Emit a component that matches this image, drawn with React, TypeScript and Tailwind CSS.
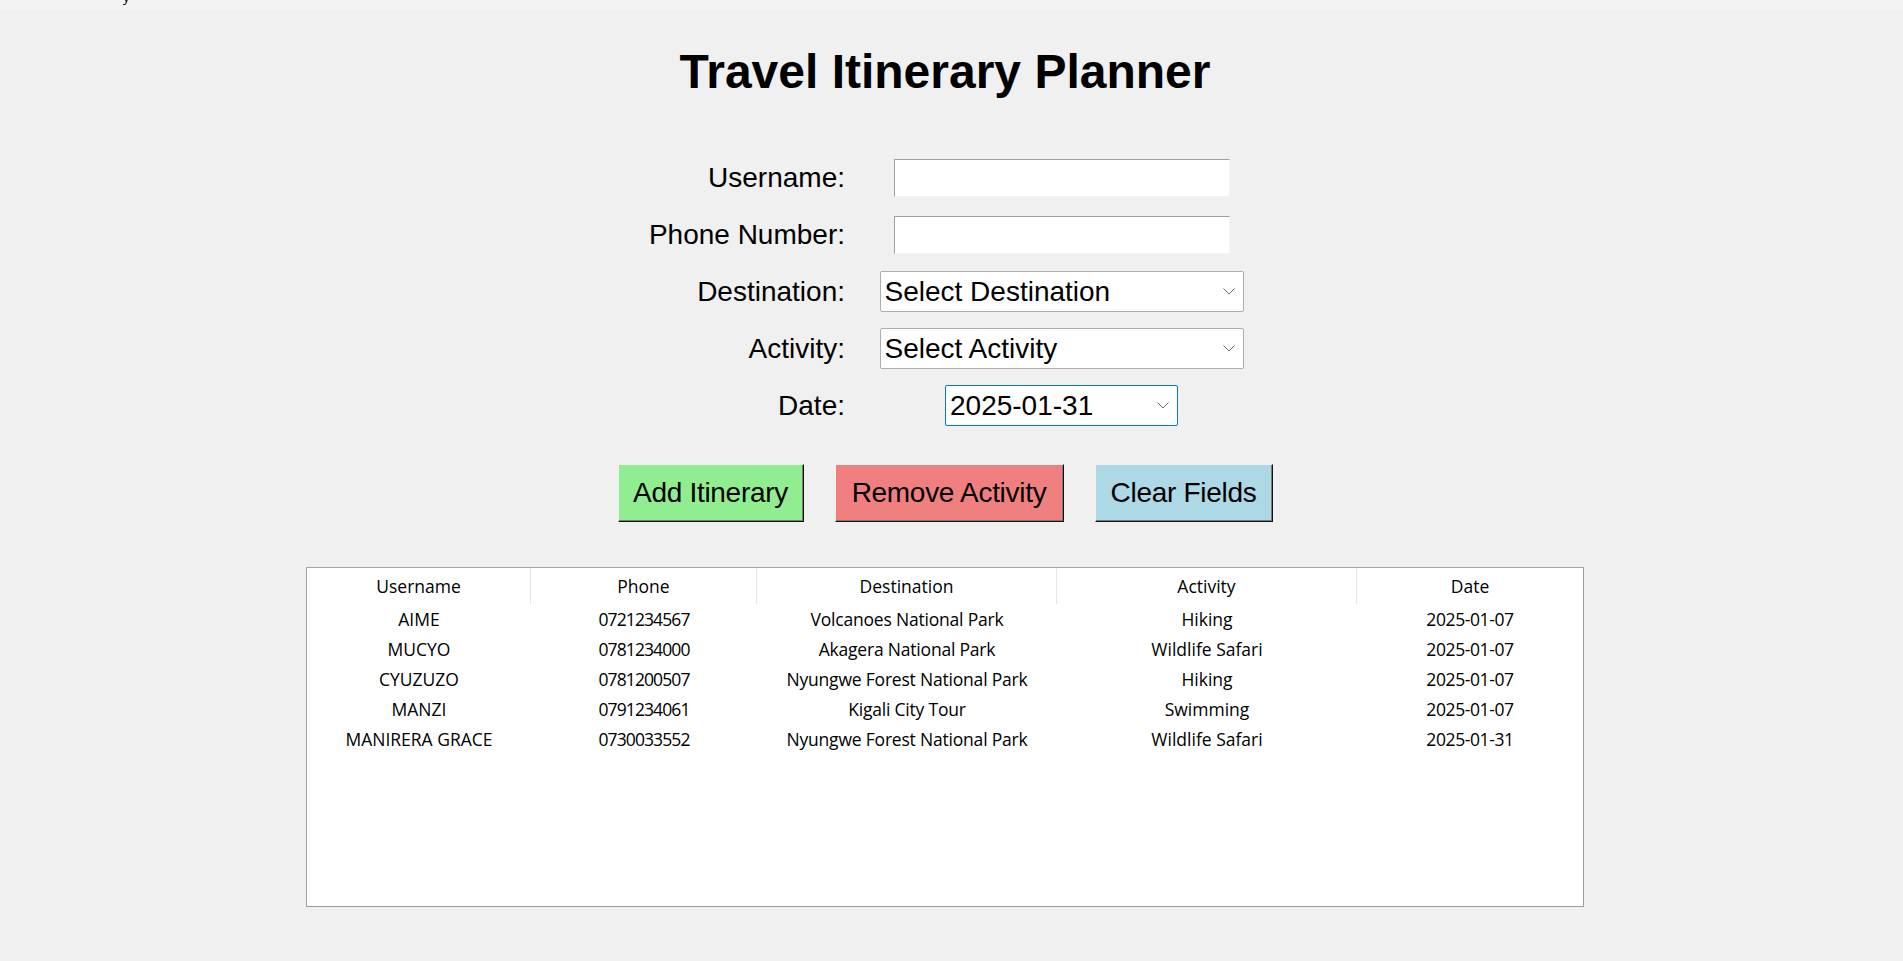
import type { ReactNode } from "react";

const rows = [
  { user: "AIME", phone: "0721234567", dest: "Volcanoes National Park", act: "Hiking", date: "2025-01-07" },
  { user: "MUCYO", phone: "0781234000", dest: "Akagera National Park", act: "Wildlife Safari", date: "2025-01-07" },
  { user: "CYUZUZO", phone: "0781200507", dest: "Nyungwe Forest National Park", act: "Hiking", date: "2025-01-07" },
  { user: "MANZI", phone: "0791234061", dest: "Kigali City Tour", act: "Swimming", date: "2025-01-07" },
  { user: "MANIRERA GRACE", phone: "0730033552", dest: "Nyungwe Forest National Park", act: "Wildlife Safari", date: "2025-01-31" },
];

function Chevron() {
  return (
    <svg width="12" height="7" viewBox="0 0 12 7" className="shrink-0" aria-hidden="true">
      <polyline points="0.5,0.5 6,6 11.5,0.5" fill="none" stroke="#6b6b6b" strokeWidth="1" />
    </svg>
  );
}

function Entry() {
  return <div className="h-[38px] w-[336px] bg-white border-t border-l border-t-[#a0a0a0] border-l-[#a0a0a0] border-b border-r border-b-[#f4f4f4] border-r-[#f4f4f4]" />;
}

function Combo({ text, width, focused }: { text: string; width: string; focused?: boolean }) {
  return (
    <div
      className={`${width} h-[41px] flex items-center justify-between bg-white rounded-[2px] border pl-[4px] pr-[8px] text-[28px] leading-none text-black ${
        focused ? "border-[#0078d7]" : "border-[#adadad]"
      }`}
    >
      <span>{text}</span>
      <Chevron />
    </div>
  );
}

function Field({ label, children }: { label: string; children: ReactNode }) {
  return (
    <>
      <div className="h-[57px] flex items-center justify-end text-[28px] leading-none text-black">{label}</div>
      <div className="h-[57px] flex items-center justify-center">{children}</div>
    </>
  );
}

function TkButton({ label, width, bg }: { label: string; width: string; bg: string }) {
  return (
    <button
      className={`${width} ${bg} h-[58px] flex items-center justify-center text-[28px] leading-none tracking-[-0.3px] text-black border-t border-l border-t-[#f2f2f2] border-l-[#f2f2f2] border-b border-r border-b-[#111111] border-r-[#111111] shadow-[inset_-1px_-1px_0_#7a7a7a]`}
    >
      {label}
    </button>
  );
}

export default function App() {
  return (
    <div className="min-h-screen w-full bg-[#f0f0f0] text-black [font-family:'Liberation_Sans',Arial,sans-serif]">
      {/* window caption remnant */}
      <div className="h-[10px] overflow-hidden bg-[#f3f3f3] pl-[123px]">
        <span className="block -mt-[9px] text-[13px] leading-none [font-family:'Open_Sans',sans-serif]">y</span>
      </div>

      <div className="flex flex-col items-center pr-[13px]">
        <h1 className="mt-[38px] text-[48px] leading-[48px] font-bold">Travel Itinerary Planner</h1>

        <div className="mt-[53px] grid grid-cols-[233px_433px]">
          <Field label="Username:">
            <Entry />
          </Field>
          <Field label="Phone Number:">
            <Entry />
          </Field>
          <Field label="Destination:">
            <Combo text="Select Destination" width="w-[364px]" />
          </Field>
          <Field label="Activity:">
            <Combo text="Select Activity" width="w-[364px]" />
          </Field>
          <Field label="Date:">
            <Combo text="2025-01-31" width="w-[233px]" focused />
          </Field>
        </div>

        <div className="mt-[30px] flex gap-[31px]">
          <TkButton label="Add Itinerary" width="w-[186px]" bg="bg-[#90ee90]" />
          <TkButton label="Remove Activity" width="w-[229px]" bg="bg-[#f08080]" />
          <TkButton label="Clear Fields" width="w-[178px]" bg="bg-[#add8e6]" />
        </div>

        <div className="mt-[45px] w-[1278px] h-[340px] bg-white border border-[#a0a3a8] border-r-[#9a9ca0] border-b-[#9a9ca0] [font-family:'Open_Sans',sans-serif] text-[17.5px] text-black">
          <div className="grid grid-cols-[224px_226px_300px_300px_226px] h-[36px] leading-[36px] text-center">
            <div className="border-r border-[#e5e5e5]">Username</div>
            <div className="border-r border-[#e5e5e5]">Phone</div>
            <div className="border-r border-[#e5e5e5]">Destination</div>
            <div className="border-r border-[#e5e5e5]">Activity</div>
            <div>Date</div>
          </div>
          {rows.map((r) => (
            <div key={r.user} className="grid grid-cols-[224px_226px_300px_300px_226px] h-[30px] leading-[30px] text-center">
              <div>{r.user}</div>
              <div className="tracking-[-0.9px]">{r.phone}</div>
              <div className="tracking-[-0.2px]">{r.dest}</div>
              <div>{r.act}</div>
              <div className="tracking-[-0.4px]">{r.date}</div>
            </div>
          ))}
        </div>
      </div>
    </div>
  );
}
